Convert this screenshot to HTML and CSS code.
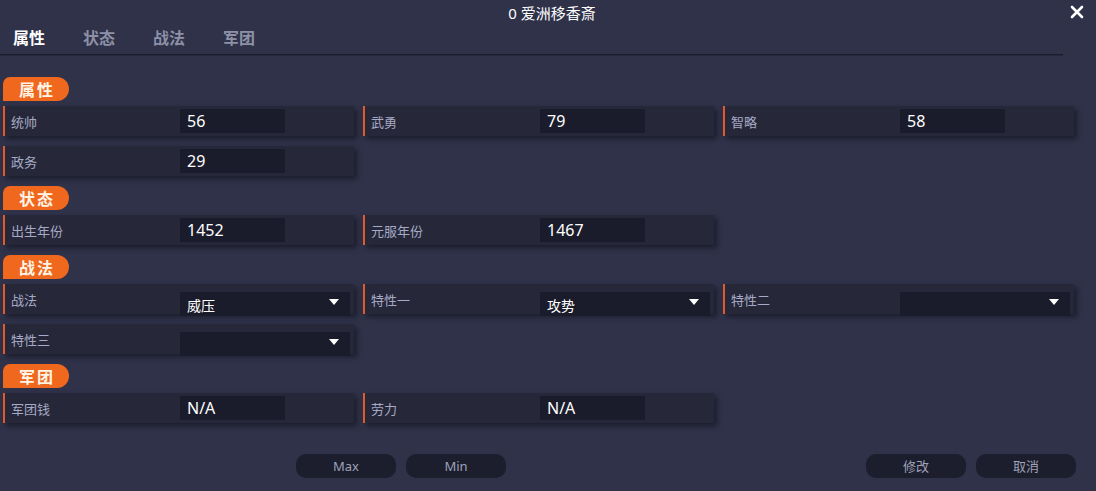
FILE: index.html
```html
<!DOCTYPE html>
<html lang="zh">
<head>
<meta charset="utf-8">
<link rel="stylesheet" href="styles.css">
</head>
<body>
<div class="window">
  <header class="titlebar">
    <div class="title">0 爱洲移香斎</div>
    <button class="close" aria-label="close">
      <svg width="14" height="14" viewBox="0 0 14 14"><path d="M2 2 L12 12 M12 2 L2 12" stroke="#ffffff" stroke-width="2.6" stroke-linecap="round"/></svg>
    </button>
  </header>
  <nav class="tabs">
    <span class="tab active">属性</span>
    <span class="tab">状态</span>
    <span class="tab">战法</span>
    <span class="tab">军团</span>
  </nav>
  <div class="divider"></div>

  <main class="content">
    <section class="section">
      <div class="badge">属性</div>
      <div class="grid">
        <div class="field"><span class="label">统帅</span><span class="input">56</span></div>
        <div class="field"><span class="label">武勇</span><span class="input">79</span></div>
        <div class="field"><span class="label">智略</span><span class="input">58</span></div>
        <div class="field"><span class="label">政务</span><span class="input">29</span></div>
      </div>
    </section>

    <section class="section">
      <div class="badge">状态</div>
      <div class="grid">
        <div class="field"><span class="label">出生年份</span><span class="input">1452</span></div>
        <div class="field"><span class="label">元服年份</span><span class="input">1467</span></div>
      </div>
    </section>

    <section class="section">
      <div class="badge">战法</div>
      <div class="grid">
        <div class="field"><span class="label">战法</span><span class="select"><span class="opt">威压</span><span class="arrow"></span></span></div>
        <div class="field"><span class="label">特性一</span><span class="select"><span class="opt">攻势</span><span class="arrow"></span></span></div>
        <div class="field"><span class="label">特性二</span><span class="select"><span class="opt"></span><span class="arrow"></span></span></div>
        <div class="field"><span class="label">特性三</span><span class="select"><span class="opt"></span><span class="arrow"></span></span></div>
      </div>
    </section>

    <section class="section">
      <div class="badge">军团</div>
      <div class="grid">
        <div class="field"><span class="label">军团钱</span><span class="input">N/A</span></div>
        <div class="field"><span class="label">劳力</span><span class="input">N/A</span></div>
      </div>
    </section>
  </main>

  <footer class="footer">
    <div class="btns">
      <button class="btn">Max</button>
      <button class="btn">Min</button>
    </div>
    <div class="btns">
      <button class="btn">修改</button>
      <button class="btn">取消</button>
    </div>
  </footer>
</div>
</body>
</html>
```

FILE: styles.css
```css
* { box-sizing: border-box; }
html, body {
  margin: 0;
  padding: 0;
  background: #2f3249;
  width: 1096px;
  height: 491px;
  overflow: hidden;
  font-family: "Noto Sans", "Noto Sans CJK SC", sans-serif;
}
.window {
  position: relative;
  width: 1096px;
  height: 491px;
}
.titlebar {
  height: 25px;
  display: flex;
  align-items: center;
  justify-content: center;
  position: relative;
}
.title {
  color: #ffffff;
  font-size: 15px;
  line-height: 20px;
  margin-left: 8px;
}
.close {
  position: absolute;
  right: 12px;
  top: 5px;
  width: 14px;
  height: 14px;
  padding: 0;
  border: 0;
  background: none;
  display: flex;
}
.tabs {
  display: flex;
  gap: 38px;
  padding-left: 13px;
  height: 24px;
  align-items: center;
}
.tab {
  font-family: "Noto Sans CJK SC", sans-serif;
  font-size: 16px;
  font-weight: 700;
  color: #8d90a6;
  width: 32px;
  line-height: 20px;
}
.tab.active { color: #ffffff; }
.divider {
  margin-top: 5px;
  width: 1063px;
  height: 1px;
  background: #1a1c2a;
  box-shadow: 0 1px 0 #262840;
}
.content {
  padding: 22px 0 0 3px;
  display: flex;
  flex-direction: column;
  gap: 10px;
}
.section {
  display: flex;
  flex-direction: column;
}
.badge {
  width: 66px;
  height: 24px;
  background: #f0671e;
  border-radius: 7px 12px 12px 0;
  color: #fff4e6;
  font-family: "Noto Sans CJK SC", sans-serif;
  font-weight: 700;
  font-size: 16px;
  letter-spacing: 2px;
  line-height: 24px;
  text-align: center;
  padding-left: 2px;
  margin-bottom: 5px;
}
.grid {
  display: grid;
  grid-template-columns: repeat(3, 351px);
  column-gap: 9px;
  row-gap: 10px;
}
.field {
  height: 30px;
  background: #262839;
  border-left: 2px solid #e25a2a;
  box-shadow: 3px 3px 5px rgba(12, 13, 22, 0.55);
  display: flex;
  align-items: center;
  position: relative;
}
.label {
  font-family: "Noto Sans CJK SC", sans-serif;
  font-size: 13px;
  color: #a7aac6;
  padding-left: 6px;
  width: 175px;
  flex: none;
}
.input {
  width: 105px;
  height: 24px;
  background: #1b1c2b;
  color: #ffffff;
  font-family: "Noto Sans", sans-serif;
  font-size: 16px;
  line-height: 24px;
  padding-left: 7px;
}
.select {
  width: 170px;
  height: 24px;
  margin-top: 9px;
  background: #1b1c2b;
  display: flex;
  align-items: center;
  justify-content: space-between;
  padding: 0 11px 0 7px;
}
.opt {
  font-family: "Noto Sans CJK SC", sans-serif;
  color: #ffffff;
  font-size: 14px;
  line-height: 24px;
  padding-top: 2px;
}
.arrow {
  width: 0;
  height: 0;
  border-left: 5px solid transparent;
  border-right: 5px solid transparent;
  border-top: 6px solid #ffffff;
  margin-top: -4px;
}
.footer {
  display: flex;
  justify-content: space-between;
  padding: 0 20px 0 296px;
  margin-top: 31px;
}
.btns {
  display: flex;
  gap: 10px;
}
.btn {
  width: 100px;
  height: 24px;
  border: 0;
  border-radius: 10px;
  background: #1c1d2d;
  color: #9fa2b8;
  font-family: "Noto Sans", "Noto Sans CJK SC", sans-serif;
  font-size: 13px;
  padding: 0;
  line-height: 24px;
}
```
